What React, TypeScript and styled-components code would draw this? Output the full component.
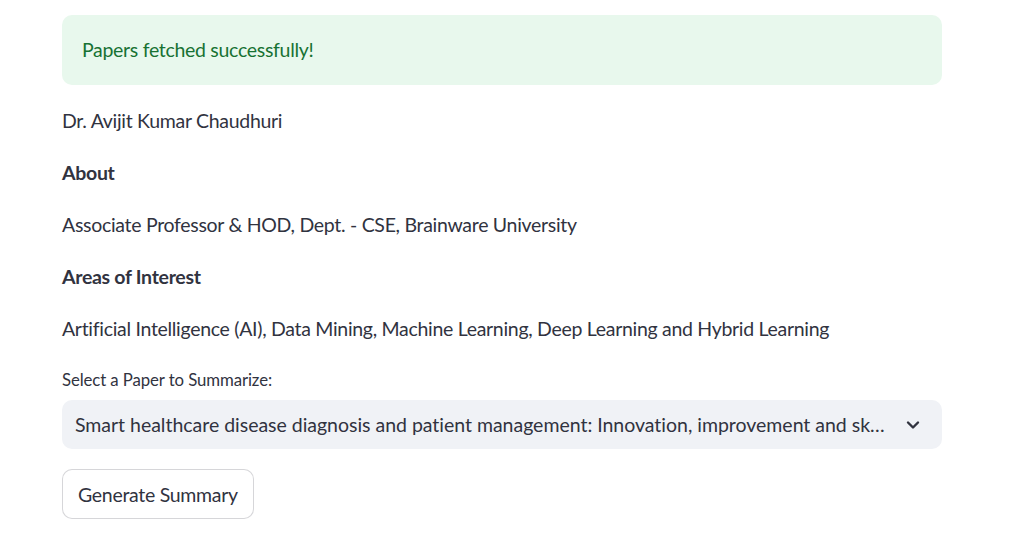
import styled, { createGlobalStyle } from 'styled-components';

const GlobalStyle = createGlobalStyle`
  html, body {
    margin: 0;
    padding: 0;
    background: #ffffff;
  }
  body {
    font-family: 'Lato', 'Liberation Sans', sans-serif;
    color: rgb(49, 51, 63);
  }
`;

const Main = styled.div`
  width: 880px;
  margin-left: 62px;
  padding-top: 15px;
  display: flex;
  flex-direction: column;
  gap: 20px;
`;

const Alert = styled.div`
  background: rgb(232, 248, 237);
  color: rgb(23, 114, 51);
  border-radius: 10px;
  padding: 19px 20px;
  font-size: 19.5px;
  letter-spacing: -0.3px;
  line-height: 32px;
`;

const Text = styled.p<{ $bold?: boolean }>`
  margin: 0;
  font-size: 19.5px;
  letter-spacing: -0.3px;
  line-height: 32px;
  font-weight: ${(p) => (p.$bold ? 700 : 400)};
`;

const Field = styled.div`
  display: flex;
  flex-direction: column;
  gap: 5px;
`;

const Label = styled.label`
  font-size: 16.8px;
  letter-spacing: -0.1px;
  line-height: 30px;
`;

const Select = styled.div`
  height: 49px;
  background: rgb(240, 242, 246);
  border-radius: 10px;
  display: flex;
  align-items: center;
  padding: 0 22px 0 13px;
  gap: 20px;
`;

const SelectValue = styled.span`
  flex: 1;
  min-width: 0;
  white-space: nowrap;
  font-size: 19.5px;
  letter-spacing: -0.02px;
`;

const Chevron = () => (
  <svg width="14" height="10" viewBox="0 0 14 10">
    <path d="M2 2.5 L7 7.5 L12 2.5" fill="none" stroke="rgb(49,51,63)" strokeWidth="2.4" strokeLinecap="round" strokeLinejoin="round" />
  </svg>
);

const Button = styled.button`
  align-self: flex-start;
  height: 50px;
  padding: 0 15px;
  background: #ffffff;
  border: 1px solid rgba(49, 51, 63, 0.2);
  border-radius: 10px;
  font-family: inherit;
  font-size: 19.5px;
  letter-spacing: -0.3px;
  color: rgb(49, 51, 63);
`;

export default function App() {
  return (
    <>
      <GlobalStyle />
      <Main>
        <Alert>Papers fetched successfully!</Alert>
        <Text>Dr. Avijit Kumar Chaudhuri</Text>
        <Text $bold>About</Text>
        <Text>Associate Professor &amp; HOD, Dept. - CSE, Brainware University</Text>
        <Text $bold>Areas of Interest</Text>
        <Text>Artificial Intelligence (AI), Data Mining, Machine Learning, Deep Learning and Hybrid Learning</Text>
        <Field>
          <Label>Select a Paper to Summarize:</Label>
          <Select>
            <SelectValue>
              Smart healthcare disease diagnosis and patient management: Innovation, improvement and sk…
            </SelectValue>
            <Chevron />
          </Select>
        </Field>
        <Button>Generate Summary</Button>
      </Main>
    </>
  );
}
